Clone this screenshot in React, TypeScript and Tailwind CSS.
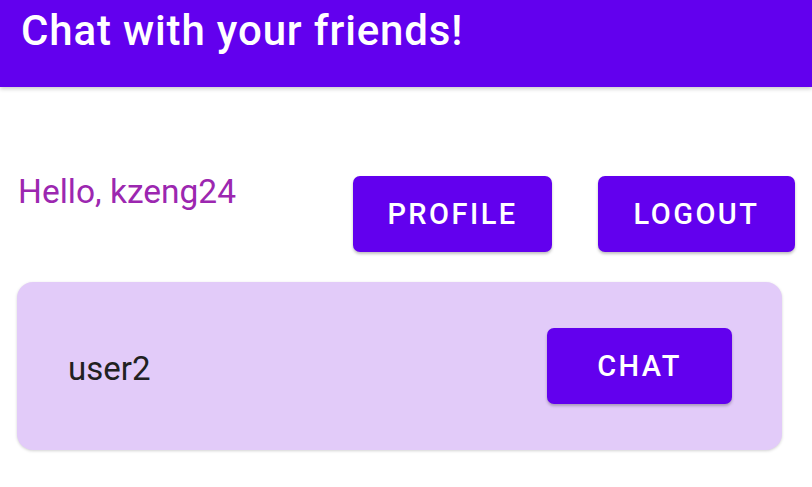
import React from "react";

const FRIENDS = [{ name: "user2" }];

function PurpleButton({ label, className }: { label: string; className: string }) {
  return (
    <button
      className={
        "flex items-center justify-center pt-[2px] rounded-[7px] bg-[#6200ee] text-white text-[29px] font-medium uppercase tracking-[0.085em] shadow-[0_2px_3px_rgba(0,0,0,0.25)] " +
        className
      }
    >
      {label}
    </button>
  );
}

export default function App() {
  return (
    <div className="w-[812px] h-[487px] bg-white overflow-hidden" style={{ fontFamily: "Roboto, 'Liberation Sans', sans-serif" }}>
      {/* App bar */}
      <div className="h-[87px] bg-[#6200ee] px-[21px] pt-[7px] shadow-[0_2px_4px_rgba(0,0,0,0.2)]">
        <h1 className="text-white text-[42px] font-medium leading-[48px] tracking-[0.02em]">Chat with your friends!</h1>
      </div>

      {/* Greeting + actions */}
      <div className="flex items-start mt-[89px] pl-[18px] pr-[17px]">
        <div className="flex-1 -mt-[9px] text-[33.5px] text-[#9c27b0]">Hello, kzeng24</div>
        <div className="flex gap-[46px]">
          <PurpleButton label="Profile" className="w-[199px] h-[76px]" />
          <PurpleButton label="Logout" className="w-[197px] h-[76px]" />
        </div>
      </div>

      {/* Friend list */}
      <div className="flex flex-col mt-[30px] pl-[17px] pr-[30px]">
        {FRIENDS.map((f) => (
          <div
            key={f.name}
            className="flex items-center justify-between h-[168px] rounded-[16px] bg-[#e2cbf9] pl-[51px] pr-[50px] shadow-[0_1px_3px_rgba(0,0,0,0.18)]"
          >
            <span className="pt-[6px] text-[33px] text-[#212121]">{f.name}</span>
            <PurpleButton label="Chat" className="w-[185px] h-[76px]" />
          </div>
        ))}
      </div>
    </div>
  );
}
